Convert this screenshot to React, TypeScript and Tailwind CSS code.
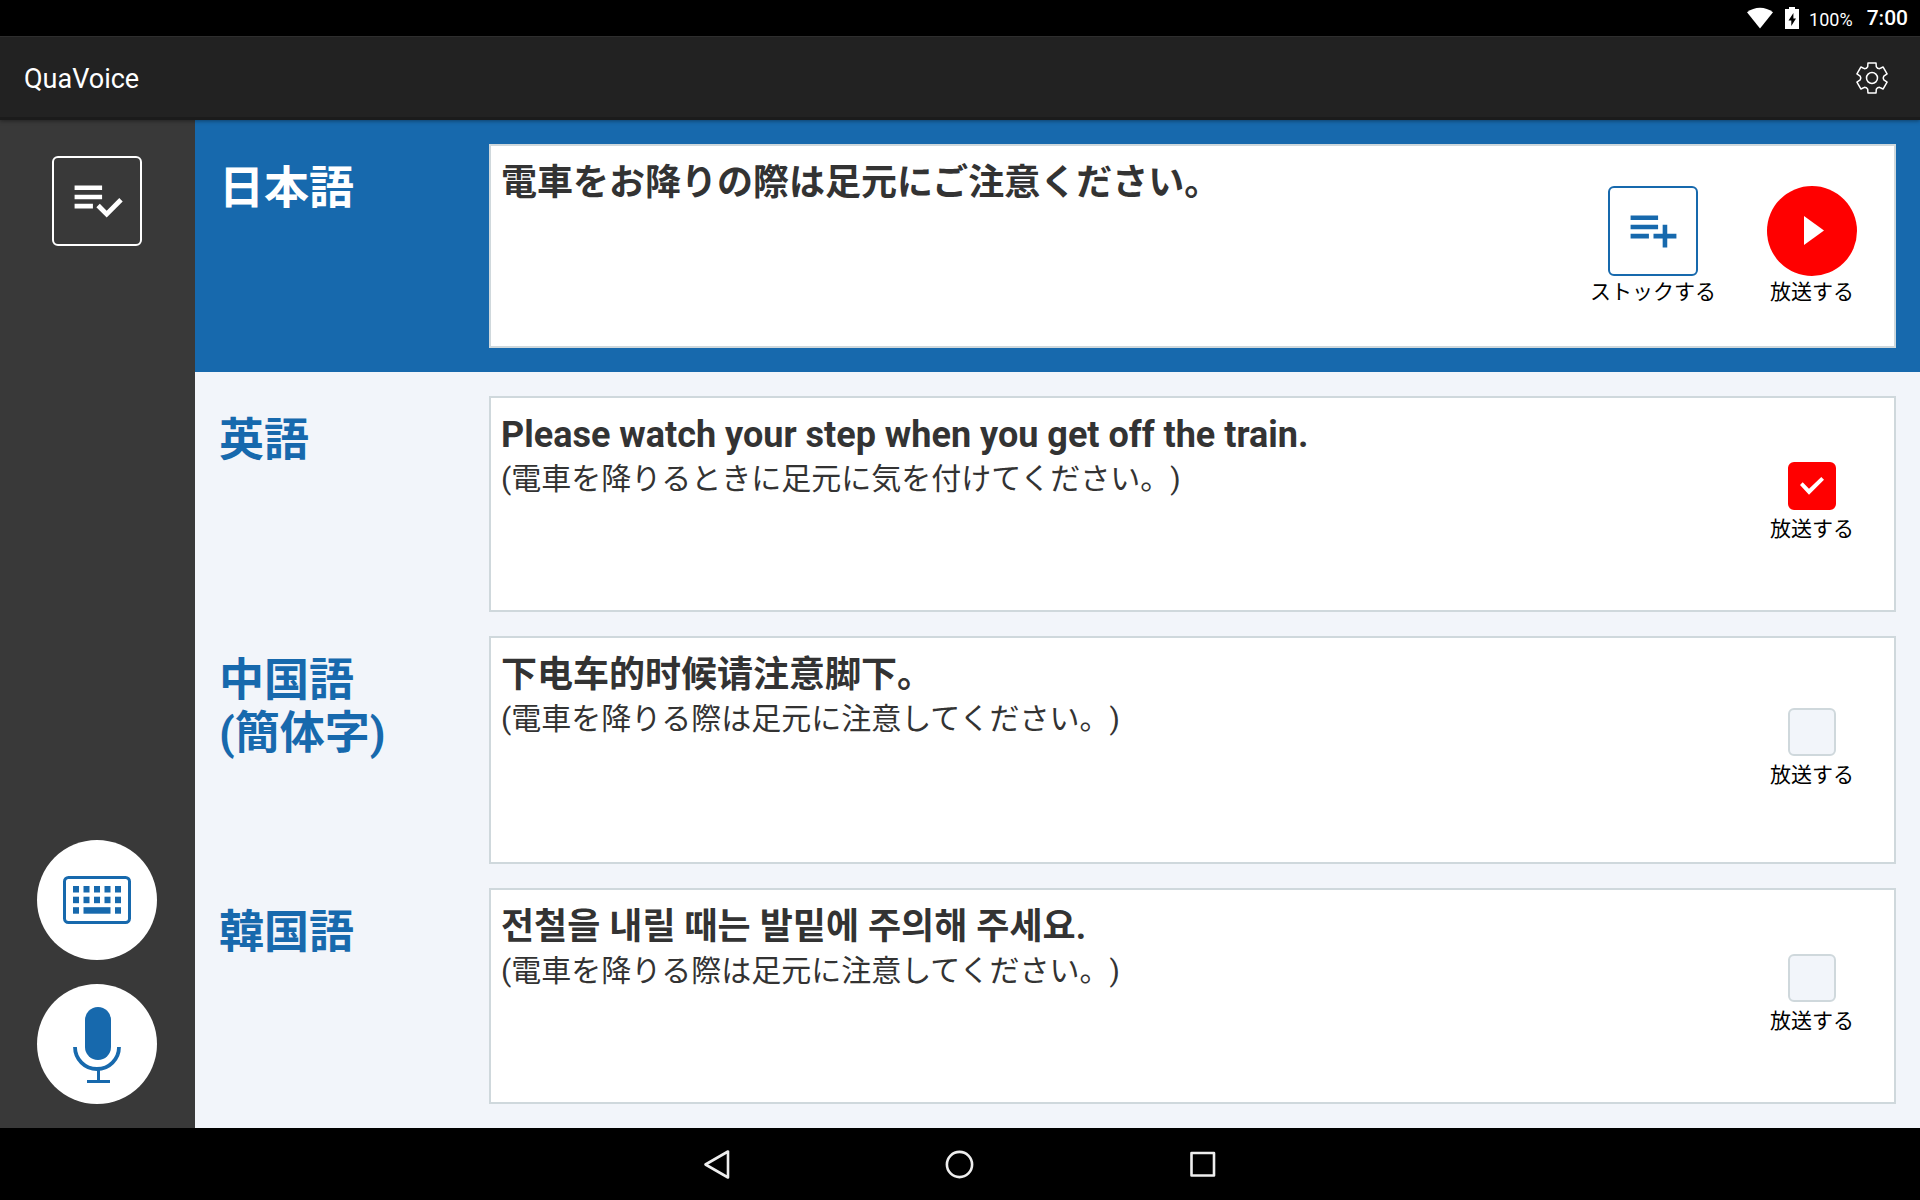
import { useState } from "react";
import type { ReactNode } from "react";

interface Translation {
  id: string;
  label: string[];
  lang: string;
  text: string;
  back: string;
  textClass: string;
  boxClass: string;
}

const TRANSLATIONS: Translation[] = [
  {
    id: "en",
    label: ["英語"],
    lang: "en",
    text: "Please watch your step when you get off the train.",
    back: "(電車を降りるときに足元に気を付けてください。)",
    textClass: "font-bold",
    boxClass: "min-h-[216px]",
  },
  {
    id: "zh",
    label: ["中国語", "(簡体字)"],
    lang: "zh-CN",
    text: "下电车的时候请注意脚下。",
    back: "(電車を降りる際は足元に注意してください。)",
    textClass: "font-['Roboto','Noto_Sans_CJK_SC',sans-serif] font-bold",
    boxClass: "min-h-[228px]",
  },
  {
    id: "ko",
    label: ["韓国語"],
    lang: "ko",
    text: "전철을 내릴 때는 발밑에 주의해 주세요.",
    back: "(電車を降りる際は足元に注意してください。)",
    textClass: "font-['Roboto','Noto_Sans_CJK_KR',sans-serif] font-bold",
    boxClass: "min-h-[216px]",
  },
];

// six-toothed gear outline, five points per tooth
const GEAR_PATH =
  [0, 60, 120, 180, 240, 300]
    .flatMap((a) => [
      [15.6, a - 15],
      [15.6, a + 15],
      [12, a + 21],
      [11.2, a + 30],
      [12, a + 39],
    ])
    .map(([r, deg], i) => {
      const t = (deg * Math.PI) / 180;
      return `${i ? "L" : "M"}${(r * Math.sin(t)).toFixed(2)} ${(-r * Math.cos(t)).toFixed(2)}`;
    })
    .join("") + "Z";

function StatusBar() {
  return (
    <div className="flex h-9 items-center justify-end bg-black pr-3 text-white">
      <svg className="mr-3 h-[22px] w-[26px]" viewBox="0 0 26 22" fill="currentColor">
        <path d="M0 5.2C7.5-.8 18.500-.8 26 5.200L13 21.500z" />
      </svg>
      <svg className="mr-[10px] h-[22px] w-[14px]" viewBox="0 0 14 22">
        <path d="M0 2h4V0h6v2h4v20H0z" fill="white" />
        <path d="M8.400 6L3.500 13.500h2.800V19l4.700-7.500H8.400z" fill="black" />
      </svg>
      <span className="mr-[14px] pt-[2px] text-[18px]">100%</span>
      <span className="pt-[2px] text-[21px] font-medium">7:00</span>
    </div>
  );
}

function NavBar() {
  return (
    <nav className="flex h-[72px] items-center justify-center bg-black text-[#eeeeee]">
      <button type="button" aria-label="Back" className="flex h-full w-[243px] items-center justify-center">
        <svg className="h-8 w-8" viewBox="0 0 32 32" fill="none" stroke="currentColor" strokeWidth="2.6" strokeLinejoin="round">
          <path d="M27 3.500v26L4.500 16.500z" />
        </svg>
      </button>
      <button type="button" aria-label="Home" className="flex h-full w-[243px] items-center justify-center">
        <svg className="h-8 w-8" viewBox="0 0 32 32" fill="none" stroke="currentColor" strokeWidth="2.6">
          <circle cx="15.500" cy="16.500" r="12.600" />
        </svg>
      </button>
      <button type="button" aria-label="Recent apps" className="flex h-full w-[243px] items-center justify-center">
        <svg className="h-8 w-8" viewBox="0 0 32 32" fill="none" stroke="currentColor" strokeWidth="2.6" strokeLinejoin="round">
          <rect x="4.500" y="5" width="22.500" height="22.500" />
        </svg>
      </button>
    </nav>
  );
}

function Sidebar() {
  return (
    <aside className="flex w-[195px] shrink-0 flex-col items-center bg-[#393939] pt-9 pr-px pb-6">
      <button
        type="button"
        aria-label="ストック一覧"
        className="flex h-[90px] w-[90px] items-center justify-center rounded-md border-2 border-white text-white"
      >
        <svg className="h-[55px] w-[55px]" viewBox="0 1 24 24" fill="currentColor">
          <path d="M14 10H2v2h12v-2zm0-4H2v2h12V6zM2 16h8v-2H2v2zm19.500-4.500L23 13l-6.990 7-4.510-4.500L13 14l3.010 3 5.490-5.500z" />
        </svg>
      </button>
      <div className="mt-auto flex flex-col gap-6 text-[#1769ad]">
        <button type="button" aria-label="キーボード入力" className="flex h-[120px] w-[120px] items-center justify-center rounded-full bg-white">
          <svg className="h-12 w-[68px]" viewBox="0 0 68 48" fill="currentColor">
            <rect x="1.500" y="1.500" width="65" height="45" rx="4" fill="none" stroke="currentColor" strokeWidth="3" />
            {[10, 20.5, 31, 41.5, 52].map((x) => (
              <g key={x}>
                <rect x={x} y="10" width="6" height="6.500" />
                <rect x={x} y="20.700" width="6" height="6.500" />
              </g>
            ))}
            <rect x="10" y="31.200" width="6" height="6.500" />
            <rect x="20.500" y="31.200" width="27" height="6.500" />
            <rect x="52" y="31.200" width="6" height="6.500" />
          </svg>
        </button>
        <button type="button" aria-label="音声入力" className="flex h-[120px] w-[120px] items-center justify-center rounded-full bg-white">
          <svg className="h-[120px] w-[120px]" viewBox="0 0 120 120" fill="none" stroke="currentColor">
            <rect x="48" y="23" width="26" height="53" rx="13" fill="currentColor" stroke="none" />
            <path d="M38 63a22 22 0 0 0 44 0" strokeWidth="3.800" />
            <path d="M61.500 86v11M50 97.500h23" strokeWidth="3" />
          </svg>
        </button>
      </div>
    </aside>
  );
}

function LanguageRow({
  label,
  active,
  boxClass,
  actions,
  children,
}: {
  label: string[];
  active?: boolean;
  boxClass: string;
  actions: ReactNode;
  children: ReactNode;
}) {
  return (
    <section className={active ? "flex bg-[#1769ad] p-6 text-white" : "flex px-6 pt-6 text-[#1769ad]"}>
      <h2 className="w-[270px] shrink-0 pt-[18px] text-[45px] leading-[53px] font-bold">
        {label.map((line) => (
          <span key={line} className="block">
            {line}
          </span>
        ))}
      </h2>
      <div className={`flex flex-1 items-center border-2 border-[#cfd8dc] bg-white pr-[37px] pl-[10px] text-[#333333] ${boxClass}`}>
        <div className="flex-1 self-start pt-[14px]">{children}</div>
        {actions}
      </div>
    </section>
  );
}

function BroadcastCheckbox({ checked, onChange }: { checked: boolean; onChange: () => void }) {
  return (
    <label className="flex w-[90px] cursor-pointer flex-col items-center pb-[2px] text-[21px] leading-[30px] text-black">
      <span className="relative mb-1 block h-12 w-12">
        <input
          type="checkbox"
          checked={checked}
          onChange={onChange}
          className="peer block h-12 w-12 appearance-none rounded-md border-2 border-[#cfd8dc] bg-[#f2f5fa] checked:border-[#ff0000] checked:bg-[#ff0000]"
        />
        <svg
          className="pointer-events-none absolute inset-0 hidden h-12 w-12 text-white peer-checked:block"
          viewBox="0 0 48 48"
          fill="currentColor"
        >
          <path d="M12 23l2.700-2.700L21 26.700 33.300 15l2.700 2.700-15 15z" />
        </svg>
      </span>
      放送する
    </label>
  );
}

export default function App() {
  const [selected, setSelected] = useState<string[]>(["en"]);

  const toggle = (id: string) => {
    setSelected((prev) => (prev.includes(id) ? prev.filter((s) => s !== id) : [...prev, id]));
  };

  return (
    <div
      className="flex min-h-screen flex-col bg-black font-['Roboto','Noto_Sans_CJK_JP',sans-serif] [text-spacing-trim:space-all]"
      lang="ja"
    >
      <StatusBar />

      {/* App bar */}
      <header className="relative flex h-[84px] items-center justify-between border-t border-b-3 border-t-[#2e2e2e] border-b-[#1b1b1b] bg-[#222222] px-6 pt-[2px] text-white shadow-[0_1px_4px_rgba(0,0,0,0.4)]">
        <h1 className="pt-[3px] text-[27px]">QuaVoice</h1>
        <button type="button" aria-label="設定" className="mr-2">
          <svg className="h-8 w-8" viewBox="-16 -16 32 32" fill="none" stroke="currentColor" strokeWidth="1.500" strokeLinejoin="round">
            <path d={GEAR_PATH} />
            <circle r="5.500" />
          </svg>
        </button>
      </header>

      <div className="flex flex-1">
        <Sidebar />
        <main className="flex-1 bg-[#f2f5fa] pb-6">
          <LanguageRow
            active
            label={["日本語"]}
            boxClass="min-h-[204px]"
            actions={
              <div className="flex gap-[51px] pt-[2px] text-[21px] leading-8 text-black">
                <button type="button" className="flex flex-col items-center">
                  <span className="flex h-[90px] w-[90px] items-center justify-center rounded-md border-2 border-[#1769ad] text-[#1769ad]">
                    <svg className="h-[55px] w-[55px]" viewBox="0 1 24 24" fill="currentColor">
                      <path d="M14 10H2v2h12v-2zm0-4H2v2h12V6zm4 8v-4h-2v4h-4v2h4v4h2v-4h4v-2h-4zM2 16h8v-2H2v2z" />
                    </svg>
                  </span>
                  ストックする
                </button>
                <button type="button" className="flex flex-col items-center">
                  <span className="flex h-[90px] w-[90px] items-center justify-center rounded-full bg-[#ff0000] text-white">
                    <svg className="h-[90px] w-[90px]" viewBox="0 0 90 90" fill="currentColor">
                      <path d="M37 30v29l20-14.500z" />
                    </svg>
                  </span>
                  放送する
                </button>
              </div>
            }
          >
            <p className="text-[36px] leading-[46px] font-bold">電車をお降りの際は足元にご注意ください。</p>
          </LanguageRow>

          {TRANSLATIONS.map((t) => (
            <LanguageRow
              key={t.id}
              label={t.label}
              boxClass={t.boxClass}
              actions={<BroadcastCheckbox checked={selected.includes(t.id)} onChange={() => toggle(t.id)} />}
            >
              <p lang={t.lang} className={`text-[36px] leading-[46px] ${t.textClass}`}>
                {t.text}
              </p>
              <p className="text-[30px] leading-[42px]">{t.back}</p>
            </LanguageRow>
          ))}
        </main>
      </div>

      <NavBar />
    </div>
  );
}
